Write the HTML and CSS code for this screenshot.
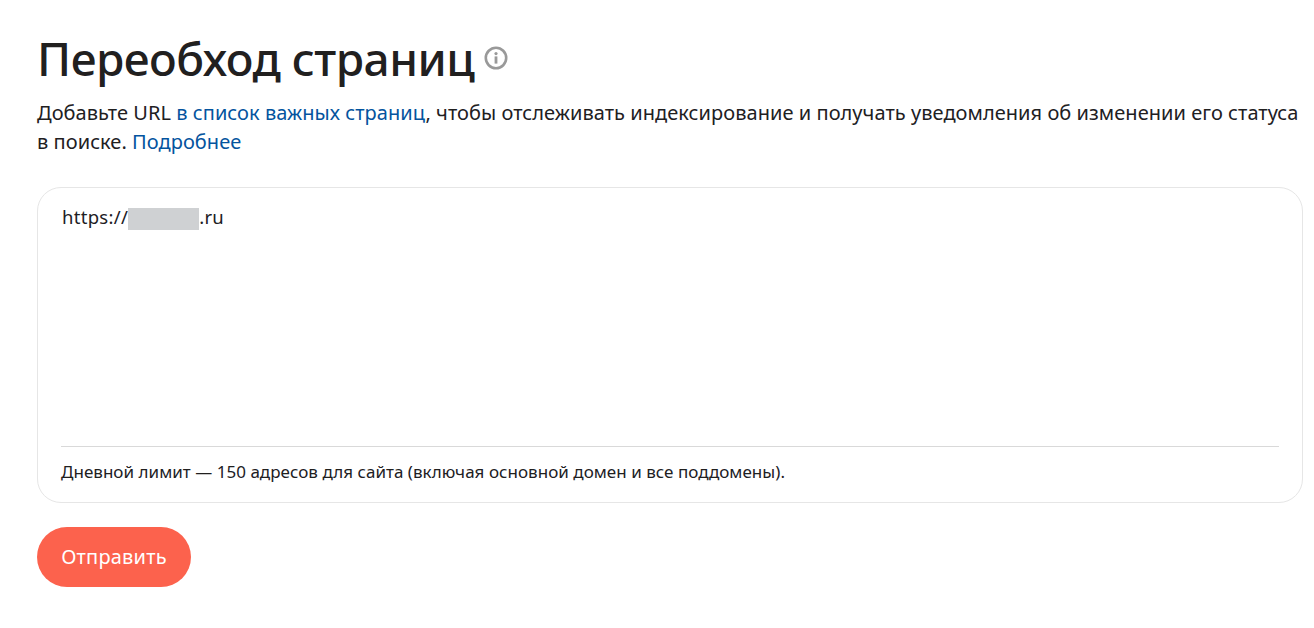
FILE: index.html
```html
<!DOCTYPE html>
<html lang="ru">
<head>
<meta charset="utf-8">
<title>Переобход страниц</title>
<link rel="stylesheet" href="styles.css">
</head>
<body>
<main class="page">
  <div class="title-row">
    <h1 class="title">Переобход страниц</h1>
    <svg class="info" viewBox="0 0 24 24" width="24" height="24" aria-hidden="true">
      <circle cx="12" cy="12" r="10.2" fill="none" stroke="#999" stroke-width="2.6"/>
      <rect x="10.6" y="10.4" width="2.8" height="7.2" fill="#999"/>
      <circle cx="12" cy="7.6" r="1.6" fill="#999"/>
    </svg>
  </div>
  <p class="lead">Добавьте URL <a href="#">в список важных страниц</a>, чтобы отслеживать индексирование и получать уведомления об изменении его статуса в поиске. <a href="#">Подробнее</a></p>
  <section class="card">
    <div class="url-area">
      <span>https://</span><span class="mask"></span><span>.ru</span>
    </div>
    <div class="card-foot">Дневной лимит — 150 адресов для сайта (включая основной домен и все поддомены).</div>
  </section>
  <button class="submit" type="button">Отправить</button>
</main>
</body>
</html>
```
FILE: styles.css
```css
* { box-sizing: border-box; }
html, body { margin: 0; height: 100%; background: #fff; overflow: hidden; }
body {
  font-family: "Noto Sans", "Open Sans", sans-serif;
  color: #21201f;
}
.page { width: 1303px; padding: 27px 0 0 37px; }
.title-row { display: flex; align-items: center; gap: 10px; height: 62px; }
.title { margin: 0; font-size: 46px; font-weight: 500; line-height: 62px; letter-spacing: -0.5px; }
.info { flex: none; }
.lead { margin: 9px 0 0; font-size: 20px; line-height: 29px; letter-spacing: 0.05px; }
.lead a { color: #04549e; text-decoration: none; }
.card {
  margin-top: 31px;
  height: 316px;
  border: 1px solid #e6e6e6;
  border-radius: 24px;
  padding: 0 23px;
  display: flex;
  flex-direction: column;
}
.url-area {
  flex: 1;
  display: flex;
  align-items: flex-start;
  padding: 16px 0 0 1px;
  font-size: 18.5px;
  line-height: 26px;
  letter-spacing: 0.3px;
}
.mask { width: 71px; height: 22px; margin-top: 4px; background: #cfd1d3; }
.card-foot {
  border-top: 1px solid #d9d9d9;
  height: 56px;
  padding-top: 14px;
  font-size: 17px;
  line-height: 22px;
  letter-spacing: 0.03px;
}
.submit {
  display: block;
  margin-top: 24px;
  width: 154px;
  height: 60px;
  border: 0;
  border-radius: 30px;
  background: #fc624d;
  color: #fff;
  font: 400 20px/28px "Noto Sans", "Open Sans", sans-serif;
  letter-spacing: 0.2px;
  padding: 0;
}
```
